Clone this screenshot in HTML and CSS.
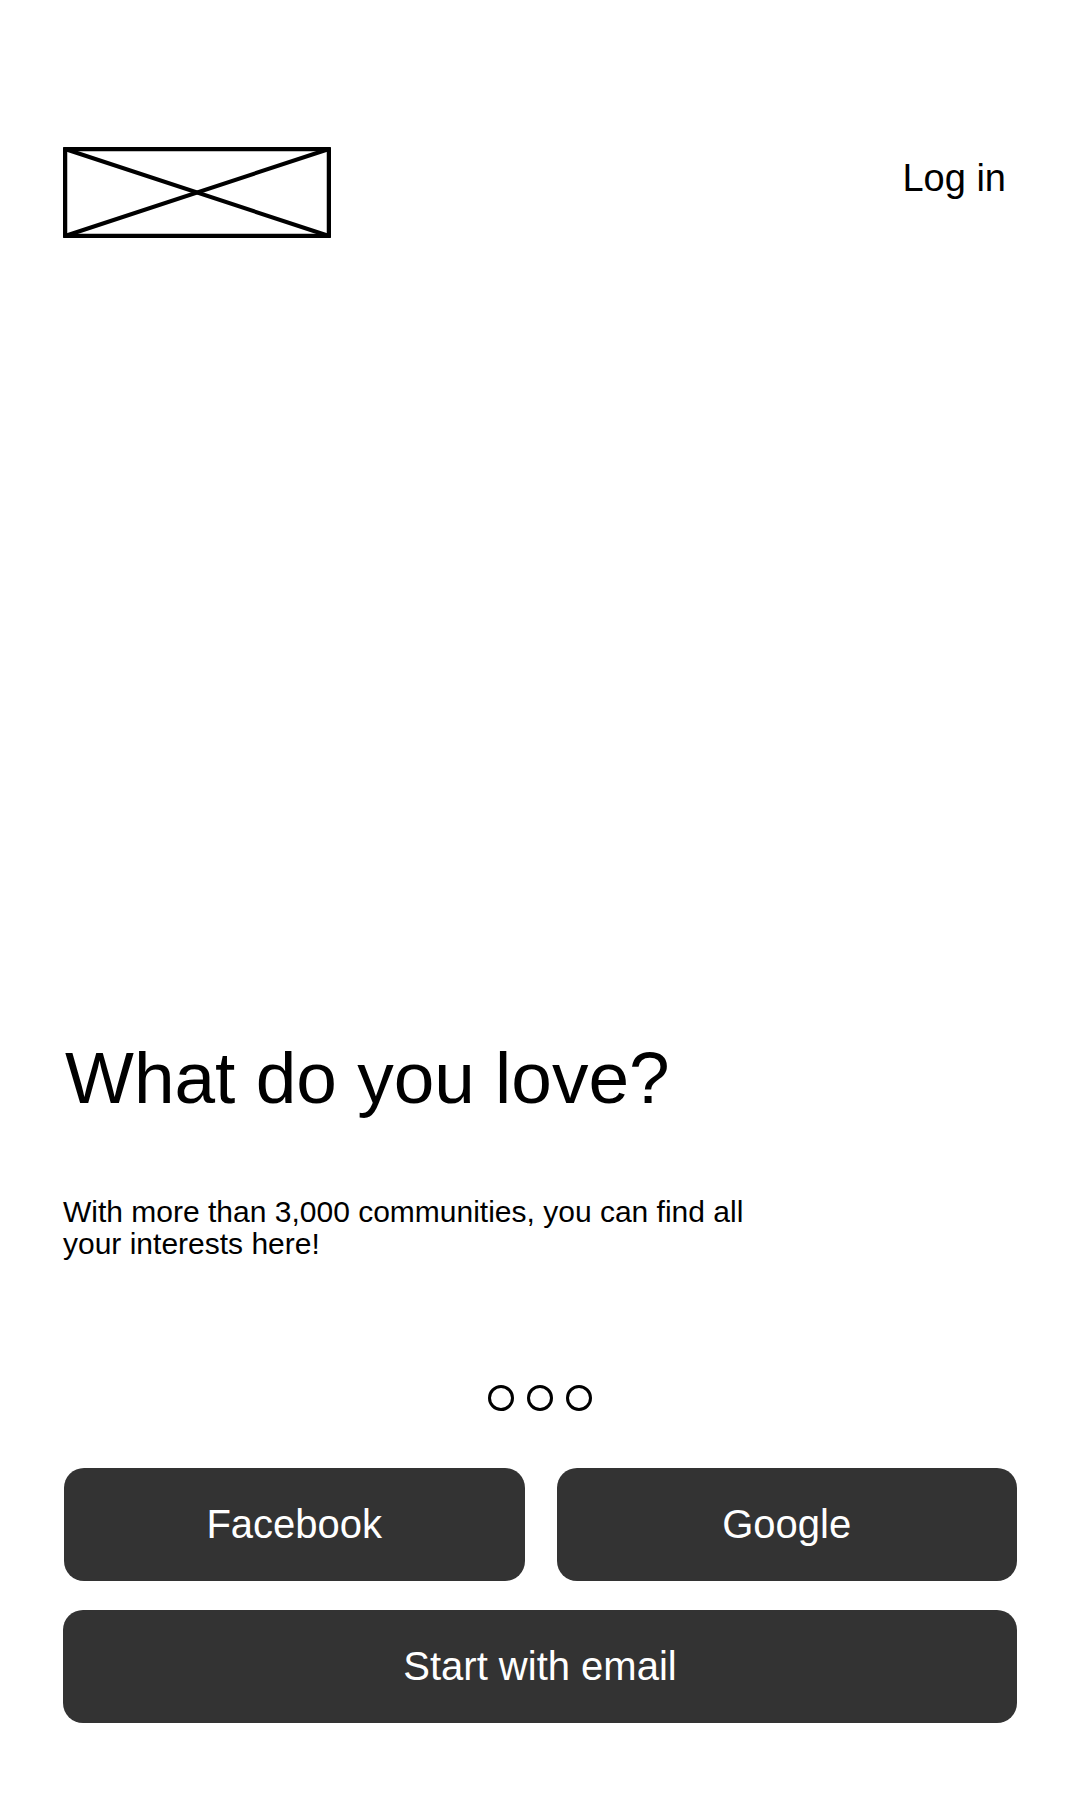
FILE: index.html
```html
<!DOCTYPE html>
<html lang="en">
<head>
<meta charset="utf-8">
<title>What do you love?</title>
<link rel="stylesheet" href="styles.css">
</head>
<body>
<div class="page">
  <header class="top">
    <svg class="logo" width="268" height="91" viewBox="0 0 268 91" aria-label="Logo">
      <rect x="2" y="2" width="264" height="87" fill="none" stroke="#000" stroke-width="4.5" stroke-linejoin="round"/>
      <line x1="2" y1="2" x2="266" y2="89" stroke="#000" stroke-width="4" stroke-linecap="round"/>
      <line x1="2" y1="89" x2="266" y2="2" stroke="#000" stroke-width="4" stroke-linecap="round"/>
    </svg>
    <a class="login" href="#">Log in</a>
  </header>

  <section class="hero">
    <h1 class="title">What do you love?</h1>
    <p class="lead">With more than 3,000 communities, you can find all your interests here!</p>
  </section>

  <div class="dots">
    <span class="dot"></span>
    <span class="dot"></span>
    <span class="dot"></span>
  </div>

  <div class="actions">
    <div class="row">
      <button class="btn">Facebook</button>
      <button class="btn">Google</button>
    </div>
    <button class="btn btn-wide">Start with email</button>
  </div>
</div>
</body>
</html>
```

FILE: styles.css
```css
* { box-sizing: border-box; }

html, body {
  margin: 0;
  padding: 0;
  background: #ffffff;
}

body {
  font-family: "Liberation Sans", Arial, sans-serif;
  color: #000;
}

.page {
  width: 1080px;
  height: 1800px;
  padding: 0 63px 0 63px;
}

.top {
  display: flex;
  justify-content: space-between;
  align-items: flex-start;
  padding-top: 147px;
  padding-right: 11px;
}

.logo {
  display: block;
}

.login {
  font-size: 38px;
  line-height: 44px;
  margin-top: 9px;
  color: #000;
  text-decoration: none;
}

.hero {
  margin-top: 803px;
}

.title {
  margin: 0 0 0 2px;
  font-size: 73px;
  line-height: 74px;
  font-weight: normal;
}

.lead {
  margin: 81px 0 0 0;
  max-width: 710px;
  font-size: 30px;
  line-height: 32px;
}

.dots {
  display: flex;
  justify-content: center;
  gap: 13px;
  margin-top: 125px;
  margin-left: -63px;
  margin-right: -63px;
}

.dot {
  width: 26px;
  height: 26px;
  border: 3px solid #000;
  border-radius: 50%;
}

.actions {
  margin-top: 57px;
  display: flex;
  flex-direction: column;
  gap: 29px;
}

.row {
  display: grid;
  grid-template-columns: 1fr 1fr;
  gap: 32px;
  padding-left: 1px;
}

.btn {
  height: 113px;
  border: none;
  border-radius: 20px;
  background: #333333;
  color: #ffffff;
  font-family: "Liberation Sans", Arial, sans-serif;
  font-size: 40px;
  padding: 0;
  cursor: pointer;
}

.btn-wide {
  width: 100%;
}
```
